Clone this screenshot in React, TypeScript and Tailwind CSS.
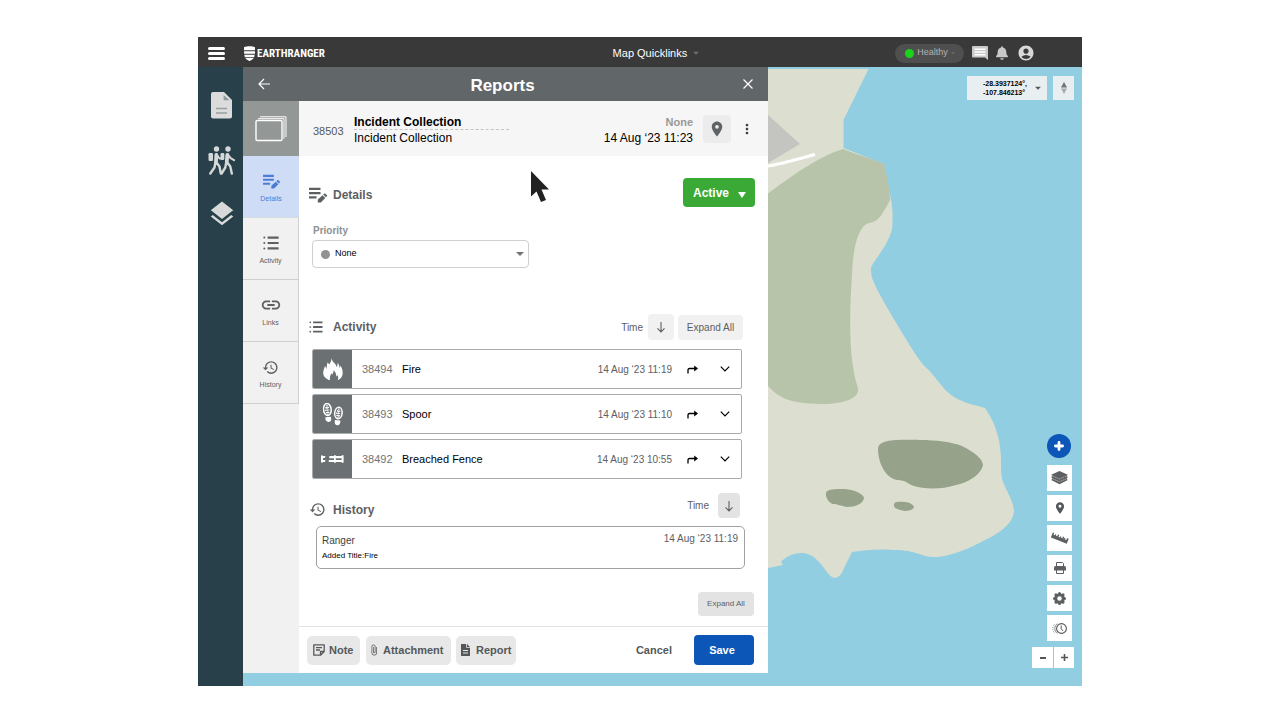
import React from 'react';
import { FaBell } from 'react-icons/fa';
import {
  MdAccountCircle,
  MdArrowDropDown,
  MdAttachFile,
  MdHistory,
  MdLayers,
  MdLink,
  MdLocationOn,
  MdMoreVert,
} from 'react-icons/md';

type IconProps = { className?: string };

const EditNoteIcon = ({ className }: IconProps) => (
  <svg viewBox="0 0 18 16" className={className} fill="currentColor" aria-hidden="true">
    <path d="M0 .8h11.500v2.300H0zM0 5h11.500v2.200H0zM0 9.200h7.500v2.200H0z" />
    <path d="M8.800 15.500v-2.900l4.700-4.400 2.800 2.800-4.500 4.500zM14.200 7.600l1-.9c.4-.3.9-.3 1.200 0l1.400 1.400c.3.3.3.8 0 1.200l-.9.900z" />
  </svg>
);

const ListIcon = ({ className }: IconProps) => (
  <svg viewBox="0 0 16 14" className={className} fill="currentColor" aria-hidden="true">
    <path d="M4.600.5h11v2.200h-11zM4.600 5.900h11v2.200h-11zM4.600 11.300h11v2.200h-11z" />
    <circle cx="1.300" cy="1.600" r="1" />
    <circle cx="1.300" cy="7" r="1" />
    <circle cx="1.300" cy="12.400" r="1" />
  </svg>
);

const ArrowLeft = ({ className }: IconProps) => (
  <svg viewBox="0 0 12 12" className={className} fill="none" stroke="currentColor" strokeWidth="1.200" aria-hidden="true">
    <path d="M12 6H1M6 1 1 6l5 5" />
  </svg>
);

const ArrowDown = ({ className }: IconProps) => (
  <svg viewBox="0 0 10 12" className={className} fill="none" stroke="currentColor" strokeWidth="1.100" aria-hidden="true">
    <path d="M5 1v10M1.500 7.300 5 11l3.500-3.700" />
  </svg>
);

const CloseIcon = ({ className }: IconProps) => (
  <svg viewBox="0 0 10 10" className={className} fill="none" stroke="currentColor" strokeWidth="1.200" aria-hidden="true">
    <path d="m.5.5 9 9M9.500.5l-9 9" />
  </svg>
);

const ShieldLogo = ({ className }: IconProps) => (
  <svg viewBox="0 0 11 15" className={className} fill="currentColor" aria-hidden="true">
    <path d="M0 1.200C3 0 8 0 11 1.200V4.300H0zM0 5.200h11v2.600H.2zM.3 8.700h10.400l-.6 2.600H.9zM1.300 12.100h8.400C8.800 13.600 7 14.400 5.500 15c-1.500-.6-3.300-1.400-4.200-2.900z" />
  </svg>
);

const FileIcon = ({ className }: IconProps) => (
  <svg viewBox="0 0 21 27" className={className} aria-hidden="true">
    <path fill="#dcdcdc" d="M2 0h11l8 8v16.500a2 2 0 0 1-2 2H2a2 2 0 0 1-2-2V2a2 2 0 0 1 2-2z" />
    <path fill="#8f9a9c" d="M12.600 3v5.300h6z" />
    <path stroke="#9a9f9f" strokeWidth="1.600" d="M5 16.500h11M5 21h11" />
  </svg>
);

const HikersIcon = ({ className }: IconProps) => (
  <svg viewBox="0 0 27 29" className={className} fill="none" stroke="#d4d8d8" strokeLinecap="round" strokeLinejoin="round" aria-hidden="true">
    <circle cx="8.500" cy="3" r="2.700" fill="#d4d8d8" stroke="none" />
    <circle cx="20" cy="3" r="2.700" fill="#d4d8d8" stroke="none" />
    <rect x=".5" y="7" width="4.500" height="8" rx="1.200" fill="#d4d8d8" stroke="none" />
    <rect x="12.500" y="7" width="3.800" height="7" rx="1.200" fill="#d4d8d8" stroke="none" />
    <path strokeWidth="3.800" d="M8.300 9 8 15.500M19.300 9l-.5 6.500" />
    <path strokeWidth="2" d="m8.500 8.200 3 4.300h2M19.600 8.200l3 4 3.400 2" />
    <path strokeWidth="2.400" d="m7.500 16-1 5.500-4.200 6M8.500 16.500l3 4 1.300 7M18.300 16l-1 5.500-3.700 6M19.300 16.500l3 4 1.500 7" />
  </svg>
);

const ChatIcon = ({ className }: IconProps) => (
  <svg viewBox="0 0 16 14" className={className} aria-hidden="true">
    <path fill="#c9c9c9" d="M1 0h14a1 1 0 0 1 1 1v13l-3-2.500H1a1 1 0 0 1-1-1V1a1 1 0 0 1 1-1z" />
    <path stroke="#fff" strokeWidth="1.500" d="M2.500 3.200h11M2.500 6h11M2.500 8.800h11" />
  </svg>
);

const FramesIcon = ({ className }: IconProps) => (
  <svg viewBox="0 0 32 26" className={className} fill="none" stroke="#fff" aria-hidden="true">
    <rect x="1" y="4.500" width="26" height="20" rx="1.200" strokeWidth="1.400" />
    <path strokeWidth="1" d="M3 2.700h26v20M5 .8h26V21" />
  </svg>
);

const FlameIcon = ({ className }: IconProps) => (
  <svg viewBox="0 0 20 23" className={className} fill="currentColor" aria-hidden="true">
    <path d="M8.600 0c.2 2.200 1.300 3.800 2.900 5.200 1.100 1 1.900 2.200 2.100 3.800.8-.7 1.100-2 .9-4.200 1.300 1.400 1.900 3 2 5 .5-.4.9-1 1-2.300C19 10 19.800 12.500 19.700 15.500c-.1 3-1.900 5.300-4.900 6.700.6-1.900.5-3.500-.3-5.100-.3.700-.7 1.200-1.200 1.400 0-2.600-.9-4.700-2.800-6.200.1 2-.5 3.300-1.400 4.500-.3-.6-.4-1-.8-1.500-.9 2.200-2 4.200-1.200 7C2.600 20.900.2 18.300.2 15c0-2.500 1-4.600 1.900-7 .7 1 .9 2 1.400 2.900.4-2.100.1-4.200 1.300-6.600.5.900.9 1.600 1.400 2.100C7.600 4.700 8.500 2.500 8.600 0z" />
  </svg>
);

const SpoorIcon = ({ className }: IconProps) => (
  <svg viewBox="0 0 20 23" className={className} fill="none" stroke="#fff" aria-hidden="true">
    <g transform="rotate(-6 5 11)">
      <ellipse cx="4.800" cy="6.500" rx="3.800" ry="6" strokeWidth="1.500" />
      <path strokeWidth="1.300" strokeDasharray="1.500 .7" d="M4.800 2v10M3 4.500h3.600M2.500 7h4.600M3 9.500h3.600" />
      <path fill="#fff" stroke="none" d="M2 14h5.600c.6 3-.5 5-2.700 5S1.500 17 2 14z" />
    </g>
    <g transform="rotate(6 15 14)">
      <ellipse cx="15" cy="10" rx="3.700" ry="5.700" strokeWidth="1.500" />
      <path strokeWidth="1.300" strokeDasharray="1.500 .7" d="M15 5.500v10M13.200 8h3.600M12.700 10.300h4.600M13.200 12.600h3.600" />
      <path fill="#fff" stroke="none" d="M12.300 17.200h5.400c.5 3-.5 5-2.700 5s-3.100-2-2.700-5z" />
    </g>
  </svg>
);

const FenceIcon = ({ className }: IconProps) => (
  <svg viewBox="0 0 23 8" className={className} fill="currentColor" aria-hidden="true">
    <path d="M0 .5h2v7H0zM1 .9h3.500l-.8 2.200H1zM1 4.900h3.500l-.5 2.200H1zM8.300 1.100H22v2.100H8.300zM7.800 4.900H22V7H7.800zM13 .3h1.800v7.500H13zM20.600.3h2v7.500h-2z" />
  </svg>
);

const StackIcon = ({ className }: IconProps) => (
  <svg viewBox="0 0 17 14" className={className} fill="none" aria-hidden="true">
    <path fill="#5d6062" d="M8.500 0 16.800 3.700 15.500 5l1.300 1.300L15.500 7.700l1.300 1.300-8.300 4.200L.2 9l1.300-1.300L.2 6.300 1.500 5 .2 3.700z" />
    <path stroke="#e5e5e5" strokeWidth=".6" strokeDasharray="1.400 .8" d="m1.500 5 7 3 7-3M1.500 7.700l7 3 7-3" />
  </svg>
);

const RulerIcon = ({ className }: IconProps) => (
  <svg viewBox="0 0 18 12" className={className} aria-hidden="true">
    <path
      fill="#5d6062"
      transform="rotate(22 9 6)"
      d="M.3 3.500h1.500v2h1.400V4.300h1.200v1.200h1.400v-2h1.400v2h1.400V4.300h1.200v1.200h1.400v-2h1.400v2H13V4.300h1.200v1.200h1.400v-2h1.800v5.300H.3z"
    />
  </svg>
);

const PrinterIcon = ({ className }: IconProps) => (
  <svg viewBox="0 0 12 12" className={className} fill="none" stroke="#5d6062" aria-hidden="true">
    <path fill="#5d6062" stroke="none" d="M1.500 4h9A1.500 1.500 0 0 1 12 5.500v3H0v-3A1.500 1.500 0 0 1 1.500 4z" />
    <path d="M2.500 4.500v-4h6l1 1v3M2.500 8v3.500h7V8" />
  </svg>
);

const GearIcon = ({ className }: IconProps) => (
  <svg viewBox="-6 -6 12 12" className={className} fill="none" stroke="#5d6062" aria-hidden="true">
    <circle r="3.500" strokeWidth="2.800" />
    <path
      strokeWidth="2.800"
      strokeLinecap="round"
      d="M0-4.600V-4M0 4.600V4M-4.600 0H-4M4.600 0H4M-3.300-3.300l.5.5M3.300 3.300l-.5-.5M-3.300 3.300l.5-.5M3.300-3.300l-.5.5"
    />
  </svg>
);

const TimeSliderIcon = ({ className }: IconProps) => (
  <svg viewBox="0 0 15 11" className={className} fill="none" stroke="#55585a" aria-hidden="true">
    <circle cx="9.500" cy="5.500" r="4.900" strokeWidth="1.100" />
    <path strokeWidth="1" d="M9.200 2.500v3.200L11 8" />
    <path strokeWidth=".7" d="M5.500.7a5.600 5.600 0 0 0 0 9.600" />
    <path strokeWidth=".6" strokeDasharray="1 .8" d="M2.900 1a5.800 5.800 0 0 0 0 9" />
  </svg>
);

const NoteIcon = ({ className }: IconProps) => (
  <svg viewBox="0 0 12 12" className={className} fill="none" stroke="currentColor" strokeWidth="1.300" strokeLinejoin="round" aria-hidden="true">
    <path d="M.8.8h10.400v6.700l-3.700 3.700H.8zM11 7.500H7.500V11M3 3.700h6M3 6h4" />
  </svg>
);

const ReportIcon = ({ className }: IconProps) => (
  <svg viewBox="0 0 9 12" className={className} aria-hidden="true">
    <path fill="#55585a" d="M0 0h5.200v3.700H9V12H0zM6 0l3 3H6z" />
    <path stroke="#e8e8e8" d="M2 6.500h5M2 9h5" />
  </svg>
);

const MapBackdrop = () => (
  <svg
    className="absolute inset-0 h-full w-full"
    viewBox="243 67 839 619"
    preserveAspectRatio="xMinYMin slice"
    aria-hidden="true"
  >
    <path
      fill="#dcdfd0"
      d="M243 69H868.500L843.500 120V148L884 164L890 195C893 207 893 220 892 229C888 246 873 261 871 268C870 277 876 287 880 295C890 313 910 346 918 358C923 366 929 369 937 380C945 390 950 396 960 400C967 404 976 405 985 408C992 418 995 426 997 433C1000 442 1001 453 1001 462C1001 470 1001 477 1003 482C1006 490 1014 502 1014 512C1012 524 1002 530 993 536C979 543 958 555 938 557C920 558 920 550 893 550C878 549 865 550 852 552L847 562C843 569 842 577 835 578C828 577 825 567 817 560C812 555 807 553 802 553C792 553 784 558 781 562L783 565L768 568H243Z"
    />
    <path
      fill="#b7c4a9"
      d="M768 193.500C789 178 817 157 843 149C857 155 871 158 884 164C887 176 890 190 890 200C883 213 879 222 869 223C858 226 853 248 852 275C849 320 849 362 858 388C860 399 842 404 820 404C800 403 783 403 768 386Z"
    />
    <path fill="#c4c4c1" d="m768 115 32 29-32 19z" />
    <path fill="none" stroke="#fff" strokeWidth="3" d="M768 166c14-2 30-7 47-11.500" />
    <g fill="#96a28a">
      <path d="M878 449C878 438 904 440 920 440C936 440 952 442 962 446C974 452 983 459 983 465C981 475 967 483 956 485C941 490 923 489 914 486C908 484 905 480 898 480C886 479 878 463 878 449Z" />
      <path d="M826 493C826 489 836 489 843 489C853 489 864 494 864 498C863 504 855 507 847 507C840 506 838 504 833 504C829 503 825 497 826 493Z" />
      <path d="M894 504C895 501 901 502 905 502C909 502 914 505 914 507C913 510 909 511 905 511C900 510 893 509 894 504Z" />
    </g>
  </svg>
);

const TABS = [
  { label: 'Details', icon: <EditNoteIcon className="h-[15px] w-[17px]" /> },
  { label: 'Activity', icon: <ListIcon className="h-3.5 w-4" /> },
  { label: 'Links', icon: <MdLink className="size-[22px]" /> },
  { label: 'History', icon: <MdHistory className="size-[17px]" /> },
];

const ACTIVITY = [
  { id: 38494, title: 'Fire', time: '14 Aug ‘23 11:19', icon: <FlameIcon className="h-[23px] w-5" /> },
  { id: 38493, title: 'Spoor', time: '14 Aug ‘23 11:10', icon: <SpoorIcon className="h-[23px] w-5" /> },
  { id: 38492, title: 'Breached Fence', time: '14 Aug ‘23 10:55', icon: <FenceIcon className="h-2 w-[23px]" /> },
];

const MAP_TOOLS = [
  { label: 'Layers', icon: <StackIcon className="h-3.5 w-[17px]" /> },
  { label: 'Drop pin', icon: <MdLocationOn className="size-3.5" /> },
  { label: 'Measure', icon: <RulerIcon className="h-3 w-[18px]" /> },
  { label: 'Print', icon: <PrinterIcon className="size-3" /> },
  { label: 'Settings', icon: <GearIcon className="size-[13px]" /> },
  { label: 'Time slider', icon: <TimeSliderIcon className="h-[11px] w-[15px]" /> },
];

const TopBar = () => (
  <header className="flex h-[30px] shrink-0 items-center bg-[#393939] pt-0.5 text-white">
    <button aria-label="Menu" className="ml-2.5 flex w-[17px] flex-col gap-[2px]">
      <span className="h-[3px] w-full rounded-sm bg-white" />
      <span className="h-[3px] w-full rounded-sm bg-white" />
      <span className="h-[3px] w-full rounded-sm bg-white" />
    </button>
    <a href="#home" className="ml-[19px] flex items-center gap-0.5">
      <ShieldLogo className="h-[15px] w-[11px]" />
      <span className="font-['Roboto_Condensed','Liberation_Sans_Narrow'] text-[11px] leading-none font-bold">EARTHRANGER</span>
    </a>
    <button className="mx-auto flex items-center pl-24 text-[11px]">
      Map Quicklinks
      <MdArrowDropDown className="ml-0.5 size-3.5 text-[#707070]" />
    </button>
    <div className="mr-[47px] flex items-center">
      <button className="flex h-[19px] w-[69px] items-center justify-center rounded-full bg-[#4f4f4f] pl-1 text-[9px] text-[#b4b4b4]">
        <span className="mr-[3px] size-[9px] rounded-full bg-[#19d419]" />
        Healthy
        <MdArrowDropDown className="size-2.5 text-[#707070]" />
      </button>
      <button aria-label="Messages" className="ml-2">
        <ChatIcon className="h-3.5 w-4" />
      </button>
      <button aria-label="Alerts" className="ml-2">
        <FaBell className="h-3.5 w-3 text-[#c9c9c9]" />
      </button>
      <button aria-label="Account" className="ml-[9px]">
        <MdAccountCircle className="size-[18px] text-[#d8d8d8]" />
      </button>
    </div>
  </header>
);

const PrimaryNav = () => (
  <nav className="flex w-[45px] shrink-0 flex-col items-center bg-[#28404a] pt-[25px] pl-0.5">
    <button aria-label="Reports">
      <FileIcon className="h-[27px] w-[21px]" />
    </button>
    <button aria-label="Patrols" className="mt-[27px]">
      <HikersIcon className="h-[29px] w-[27px]" />
    </button>
    <button aria-label="Layers" className="mt-6">
      <MdLayers className="size-[30px] text-[#d8dada]" />
    </button>
  </nav>
);

const TabRail = () => (
  <nav className="flex w-14 shrink-0 flex-col bg-[#f1f1f1]">
    <div className="flex h-[55px] items-center justify-center bg-[#939796]">
      <FramesIcon className="h-[26px] w-8" />
    </div>
    {TABS.map((tab, i) => (
      <button
        key={tab.label}
        className={
          i === 0
            ? 'flex h-[62px] flex-col items-center border-b border-[#d5d9e0] bg-[#cfdcf5] pt-[17px] text-[#4b7bd6]'
            : 'flex h-[62px] flex-col items-center border-r border-b border-[#cfcfcf] pt-[17px] text-[#5d6062]'
        }
      >
        <span className="flex h-4 items-center">{tab.icon}</span>
        <span className="mt-[5px] text-[7px] leading-[10px]">{tab.label}</span>
      </button>
    ))}
  </nav>
);

const ReportHeader = () => (
  <div className="flex h-[55px] shrink-0 items-center bg-[#f6f6f6] pr-[13px] pl-3.5">
    <span className="mt-1.5 w-[41px] text-[11px] text-[#55585a]">38503</span>
    <div className="mt-1 w-[155px] text-xs text-black">
      <h2 className="border-b border-dashed border-[#c4c4c4] leading-[14px] font-bold">Incident Collection</h2>
      <p className="leading-4">Incident Collection</p>
    </div>
    <div className="mt-0.5 ml-auto text-right">
      <div className="text-[11px] leading-4 font-bold text-[#999]">None</div>
      <div className="text-xs leading-4 text-black">14 Aug ‘23 11:23</div>
    </div>
    <button aria-label="Location" className="ml-2.5 flex size-7 items-center justify-center rounded bg-[#ececec]">
      <MdLocationOn className="size-[18px] text-[#606365]" />
    </button>
    <button aria-label="More" className="ml-2">
      <MdMoreVert className="size-4 text-[#3c3f41]" />
    </button>
  </div>
);

const SectionTitle = ({ icon, children }: { icon: React.ReactNode; children: React.ReactNode }) => (
  <h3 className="flex items-center text-xs font-bold text-[#5d6062]">
    <span className="-ml-[3px] flex w-6 items-center">{icon}</span>
    {children}
  </h3>
);

const ActivityRow = ({ item }: { item: (typeof ACTIVITY)[number] }) => (
  <li className="flex h-10 items-stretch overflow-hidden rounded-xs border border-[#a9abac] bg-white">
    <div className="flex w-[39px] items-center justify-center bg-[#6b7072] text-white">{item.icon}</div>
    <div className="flex flex-1 items-center pr-[11px] pl-2.5 text-[11px]">
      <span className="w-10 text-[#707375]">{item.id}</span>
      <span className="text-black">{item.title}</span>
      <span className="ml-auto text-[10px] text-[#5d6062]">{item.time}</span>
      <button aria-label="Open report" className="ml-[15px] text-black">
        <svg viewBox="0 0 11 9" className="h-[9px] w-[11px]" fill="none" stroke="currentColor" aria-hidden="true">
          <path strokeWidth="1.300" d="M1 8.500V5Q1 3.500 2.500 3.500H8" />
          <path fill="currentColor" stroke="none" d="m7.200.5 3.800 3-3.800 3z" />
        </svg>
      </button>
      <button aria-label="Expand" className="ml-[22px] text-black">
        <svg viewBox="0 0 10 6" className="h-1.5 w-2.5" fill="none" stroke="currentColor" strokeWidth="1.200" aria-hidden="true">
          <path d="m.8.7 4.200 4.300L9.200.7" />
        </svg>
      </button>
    </div>
  </li>
);

const ReportBody = () => (
  <div className="flex flex-1 flex-col px-[13px] text-[#5d6062]">
    <div className="mt-[22px] flex h-[29px] items-stretch justify-between">
      <div className="flex items-center pt-1">
        <SectionTitle icon={<EditNoteIcon className="h-4 w-[18px]" />}>Details</SectionTitle>
      </div>
      <div className="relative">
        <select
          aria-label="Status"
          className="h-[29px] w-[72px] appearance-none rounded bg-[#3aa935] pl-2.5 text-xs font-bold text-white"
        >
          <option>Active</option>
        </select>
        <svg viewBox="0 0 8 6" className="pointer-events-none absolute top-[14px] right-[9px] h-1.5 w-2" fill="#fff" aria-hidden="true">
          <path d="M0 0h8L4 6z" />
        </svg>
      </div>
    </div>

    <label htmlFor="priority" className="mt-[17px] pl-px text-[10px] leading-[14px] font-bold text-[#8e9091]">
      Priority
    </label>
    <div className="mt-[2px] flex h-7 w-[217px] items-center rounded-sm border border-[#cfcfcf] pr-1 pl-2">
      <span className="size-[9px] rounded-full bg-[#929292]" />
      <select id="priority" className="ml-[5px] flex-1 appearance-none text-[9px] font-medium text-black">
        <option>None</option>
      </select>
      <svg viewBox="0 0 8 4" className="h-1 w-2" fill="#707375" aria-hidden="true">
        <path d="M0 0h8L4 4z" />
      </svg>
    </div>

    <div className="mt-[46px] flex items-center text-[10px]">
      <SectionTitle icon={<ListIcon className="h-3 w-3.5" />}>Activity</SectionTitle>
      <span className="ml-auto">Time</span>
      <button aria-label="Sort activity by time" className="ml-[5px] flex size-[26px] items-center justify-center rounded bg-[#f1f1f1]">
        <ArrowDown className="h-3 w-2.5" />
      </button>
      <button className="mr-3 ml-1 h-[25px] w-[65px] rounded bg-[#f1f1f1]">Expand All</button>
    </div>

    <ul className="mt-[9px] mr-[13px] flex flex-col gap-[5px]">
      {ACTIVITY.map((item) => (
        <ActivityRow key={item.id} item={item} />
      ))}
    </ul>

    <div className="mt-3.5 flex items-end text-[10px] leading-[25px]">
      <SectionTitle icon={<MdHistory className="size-[17px]" />}>History</SectionTitle>
      <span className="ml-auto">Time</span>
      <button aria-label="Sort history by time" className="mr-[15px] ml-[9px] flex h-[25px] w-[22px] items-center justify-center rounded-sm bg-[#e3e3e3]">
        <ArrowDown className="h-3 w-2.5" />
      </button>
    </div>
    <div className="mt-2 mr-2.5 ml-1 flex h-[43px] justify-between rounded-[5px] border border-[#9fa1a2] pt-[7px] pr-1.5 pl-[5px]">
      <div className="text-[#3c3f41]">
        <div className="text-[10px] leading-[14px]">Ranger</div>
        <div className="text-[8px] leading-4 text-black">Added Title:Fire</div>
      </div>
      <span className="text-[10px] leading-[10px]">14 Aug ‘23 11:19</span>
    </div>
    <button className="mt-[23px] mr-px h-6 w-14 self-end rounded-sm bg-[#e3e3e3] text-[8px]">Expand All</button>
  </div>
);

const ReportFooter = () => (
  <footer className="flex h-[47px] shrink-0 items-center border-t border-[#e3e3e3] pr-3.5 pl-2 text-[11px] font-bold text-[#55585a]">
    <button className="flex h-[29px] w-[53px] items-center gap-1 rounded-[5px] bg-[#e8e8e8] pl-1.5">
      <NoteIcon className="size-3" />
      Note
    </button>
    <button className="ml-1.5 flex h-[29px] w-[85px] items-center gap-[3px] rounded-[5px] bg-[#e8e8e8] pl-0.5">
      <MdAttachFile className="size-3" />
      Attachment
    </button>
    <button className="ml-[5px] flex h-[29px] w-[60px] items-center gap-1.5 rounded-[5px] bg-[#e8e8e8] pl-[5px]">
      <ReportIcon className="h-3 w-[9px]" />
      Report
    </button>
    <button className="ml-auto">Cancel</button>
    <button className="ml-[22px] h-[30px] w-[60px] rounded bg-[#0b56b6] pr-1 text-white">Save</button>
  </footer>
);

const ReportPanel = () => (
  <section className="relative flex w-full max-w-[525px] flex-col bg-white">
    <div className="flex h-[34px] shrink-0 items-center justify-between bg-[#616668] pr-[15px] pl-[15px] text-white">
      <button aria-label="Back">
        <ArrowLeft className="size-3" />
      </button>
      <h1 className="mt-[3px] text-[17px] leading-none font-bold">Reports</h1>
      <button aria-label="Close" className="pl-2">
        <CloseIcon className="size-2.5" />
      </button>
    </div>
    <div className="flex flex-1">
      <TabRail />
      <div className="flex min-w-0 flex-1 flex-col">
        <ReportHeader />
        <ReportBody />
        <ReportFooter />
      </div>
    </div>
  </section>
);

const MapControls = () => (
  <div className="relative flex flex-1 flex-col items-end justify-between pt-[9px] pr-2 pb-[5px]">
    <div className="flex gap-1.5">
      <button className="flex h-6 w-20 items-center justify-end gap-1 bg-[#e9eef1] pr-0.5 text-left text-[7px] leading-[9px] font-semibold text-black">
        <span>
          -28.3937124°,
          <br />
          -107.846213°
        </span>
        <MdArrowDropDown className="size-3.5 text-[#55585a]" />
      </button>
      <button aria-label="Compass" className="flex h-6 w-[21px] items-center justify-center bg-[#e9eef1]">
        <svg viewBox="0 0 6 12" className="h-3 w-1.5" aria-hidden="true">
          <path fill="#707375" d="m3 0 3 5.500H0z" />
          <path fill="#a9abac" d="M0 6.500h6L3 12z" />
        </svg>
      </button>
    </div>
    <div className="flex flex-col items-end text-[#55585a]">
      <button aria-label="Add" className="mr-[3px] mb-[7px] flex size-6 items-center justify-center rounded-full bg-[#0b56b6]">
        <svg viewBox="0 0 10 10" className="size-2.5" stroke="#fff" strokeWidth="2.800" strokeLinecap="round" aria-hidden="true">
          <path d="M5 1.400v7.200M1.400 5h7.200" />
        </svg>
      </button>
      <div className="mr-0.5 flex flex-col gap-1">
        {MAP_TOOLS.map((tool) => (
          <button key={tool.label} aria-label={tool.label} className="flex h-[26px] w-[25px] items-center justify-center bg-white">
            {tool.icon}
          </button>
        ))}
      </div>
      <div className="mt-1.5 flex gap-px">
        <button aria-label="Zoom out" className="flex h-[21px] w-[21px] items-center justify-center bg-white">
          <span className="h-0.5 w-1.5 bg-[#55585a]" />
        </button>
        <button aria-label="Zoom in" className="flex h-[21px] w-5 items-center justify-center bg-white">
          <svg viewBox="0 0 7 7" className="size-[7px]" stroke="#55585a" strokeWidth="1.600" aria-hidden="true">
            <path d="M3.500 0v7M0 3.500h7" />
          </svg>
        </button>
      </div>
    </div>
  </div>
);

export default function App() {
  return (
    <div className="flex min-h-screen flex-col bg-white px-[198px] pt-[37px] pb-[34px] font-['Liberation_Sans',Arial,sans-serif]">
      <div className="relative flex flex-1 flex-col">
        <TopBar />
        <div className="flex flex-1">
          <PrimaryNav />
          <main className="relative flex flex-1 bg-[#92cee1] pb-[13px]">
            <MapBackdrop />
            <ReportPanel />
            <MapControls />
          </main>
        </div>
        <svg viewBox="0 0 18 31" className="pointer-events-none absolute top-[134px] left-[333px] h-[31px] w-[18px]" aria-hidden="true">
          <path fill="#222" d="M0 0v25.500l5.500-5L10 31l5-2-4.500-10.500H18z" />
        </svg>
      </div>
    </div>
  );
}
